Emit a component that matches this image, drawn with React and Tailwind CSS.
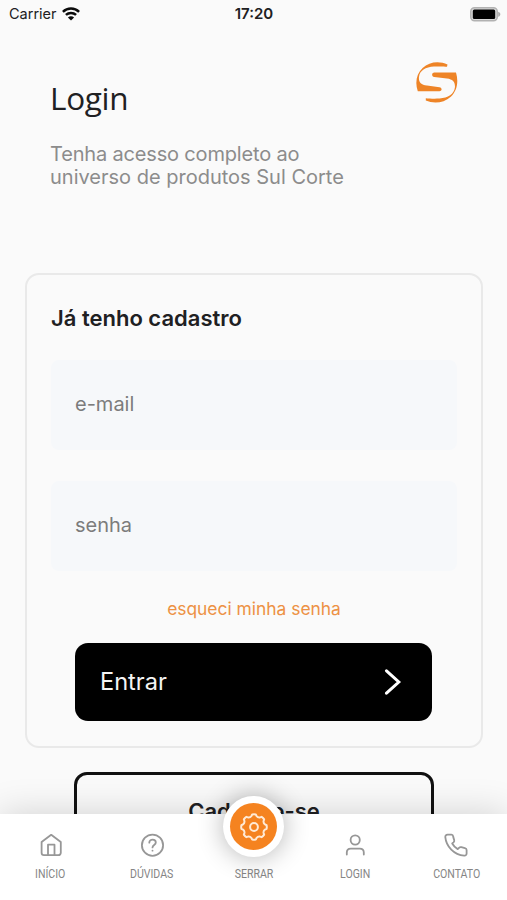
import React from "react";

const grotesk = "font-['Inter','Liberation_Sans',sans-serif]";

function WifiIcon() {
  return (
    <svg width="18" height="14" viewBox="0 0 18 14" fill="none" stroke="#0b0b0b" strokeWidth="2.5">
      <path d="M0.9 4.8C5.4 0.5 12.6 0.5 17.1 4.8" />
      <path d="M3.9 7.9C6.8 5.2 11.2 5.2 14.1 7.9" />
      <path d="M9 13.6L5.9 10.4C7.6 8.8 10.4 8.8 12.1 10.4Z" fill="#0b0b0b" stroke="none" />
    </svg>
  );
}

function BatteryIcon() {
  return (
    <svg width="31" height="15" viewBox="0 0 31 15">
      <rect x="0.75" y="0.75" width="26.5" height="13" rx="3.8" fill="#d8d8d8" stroke="#b2b2b2" strokeWidth="1.5" />
      <rect x="2.8" y="2.6" width="22.4" height="9.4" rx="1.5" fill="#000" />
      <path d="M28.2 4.7C31 5.6 31 8.9 28.2 9.8Z" fill="#aaa" />
    </svg>
  );
}

function BrandLogo() {
  return (
    <svg width="42" height="42" viewBox="0 0 42 42" fill="#ee8427">
      <path d="M31.5 2.6C23.5-1.2 13.4-.4 6.6 6C.4 11.8-1.2 21 1.8 29.2H23.5C26.3 29.2 26.3 25.5 23.5 25.2L11 23.6C4.6 22.8 2.5 20 3 15C3.7 8.5 9.5 5.2 18 4.6C23 4.3 28 4.4 31 4.8Z" />
      <path d="M9.8 38.6C17.6 42 27.9 41.2 34.8 34.8C41 29 42.8 20 40 10.6H18.4C15.4 10.6 15.4 14.7 18.2 15L31 16.6C37.2 17.4 39.4 20.5 38.9 25.6C38.2 32 32 36 23.6 36.5C18.4 36.8 13.4 36.6 9.8 36.2Z" />
    </svg>
  );
}

const polar = (radius, degrees) => {
  const a = (degrees * Math.PI) / 180;
  return `${(radius * Math.sin(a)).toFixed(2)} ${(-radius * Math.cos(a)).toFixed(2)}`;
};

// Eight rounded teeth joined by shallow concave valleys
const gearPath =
  Array.from({ length: 8 }, (_, i) => {
    const c = i * 45;
    return `${i ? "L" : "M"}${polar(12.7, c - 8)}Q${polar(13, c)} ${polar(12.7, c + 8)}L${polar(11.3, c + 13)}Q${polar(10, c + 22.5)} ${polar(11.3, c + 32)}`;
  }).join("") + "Z";

function GearIcon() {
  return (
    <svg width="28" height="28" viewBox="-14 -14 28 28" fill="none" stroke="#ffead5" strokeWidth="2" strokeLinejoin="round">
      <circle r="3.9" />
      <path d={gearPath} />
    </svg>
  );
}

const iconProps = {
  width: 26,
  height: 26,
  viewBox: "0 0 26 26",
  fill: "none",
  stroke: "#979797",
  strokeWidth: 1.8,
  strokeLinejoin: "round",
  strokeLinecap: "round",
};

const tabs = [
  {
    label: "INÍCIO",
    icon: (
      <svg {...iconProps}>
        <path d="M3.6 10L13.2 2.8L22.8 10V20.8A2.4 2.4 0 0 1 20.4 23.2H6A2.4 2.4 0 0 1 3.6 20.8Z" />
        <path d="M10 23V12.7H16.5V23" />
      </svg>
    ),
  },
  {
    label: "DÚVIDAS",
    icon: (
      <svg {...iconProps}>
        <circle cx="13.5" cy="13.2" r="10.6" />
        <path d="M10.3 10.7C10.3 6.6 16.8 6.8 16.8 10.5C16.8 13 13.5 13 13.5 15.4" />
        <path d="M13.5 18.6V18.7" />
      </svg>
    ),
  },
  { label: "SERRAR", icon: null },
  {
    label: "LOGIN",
    icon: (
      <svg {...iconProps}>
        <circle cx="13.2" cy="8" r="4.6" />
        <path d="M4.8 22.6V20.4C4.8 18 6.6 16.6 8.8 16.6H17.8C20.1 16.6 21.8 18 21.8 20.4V22.6" />
      </svg>
    ),
  },
  {
    label: "CONTATO",
    icon: (
      <svg {...iconProps}>
        <path d="M4.5 2.7H8.5C9.6 2.7 10 3.3 10.2 4.5C10.4 5.9 10.9 7 11.2 8C11.5 9 11.2 9.6 10.5 10.3L9.2 11.5C10.6 14 12.2 15.7 14.7 17.1L16 15.8C16.7 15.1 17.4 14.9 18.3 15.2C19.5 15.6 20.6 15.9 21.9 16.1C23 16.3 23.6 16.8 23.6 18V21.5C23.6 23 22.6 23.8 21.2 23.6C11 22.8 3.2 14.5 2.3 5.1C2.2 3.7 3.1 2.7 4.5 2.7Z" />
      </svg>
    ),
  },
];

function Field({ label }) {
  return (
    <div className="flex h-[90px] items-center rounded-lg bg-[#f6f8fa] pb-[2px] pl-[24px]">
      <span className="text-[20px] leading-6 text-[#7c7c7c]">{label}</span>
    </div>
  );
}

export default function App() {
  return (
    <div className={`relative h-[900px] w-[507px] overflow-hidden bg-[#fafafa] text-[#202022] ${grotesk}`}>
      <div className="grid h-7 grid-cols-3 items-center pl-[9px] pr-[6px]">
        <div className="flex items-center gap-[5px]">
          <span className="text-[14.5px] leading-7">Carrier</span>
          <WifiIcon />
        </div>
        <span className="pr-[2px] text-center text-[15px] font-semibold leading-7">17:20</span>
        <div className="flex justify-end">
          <BatteryIcon />
        </div>
      </div>

      <header className="flex h-[245px] justify-between pl-[50px] pr-[49px] pt-[34px]">
        <div>
          <h1 className="mt-[15px] font-['Open_Sans',sans-serif] text-[31.5px] leading-[42px] tracking-[-0.3px]">Login</h1>
          <p className="mt-[24px] whitespace-nowrap text-[20px] leading-[23px] text-[#8c8c8c]">
            <span className="tracking-[-0.17px]">Tenha acesso completo ao</span>
            <br />
            universo de produtos Sul Corte
          </p>
        </div>
        <BrandLogo />
      </header>

      <section className="ml-[25px] flex h-[475px] w-[458px] flex-col rounded-[14px] border-2 border-[#e9e9e9] px-6 pt-[27px]">
        <h2 className="text-[22px] font-semibold leading-8">Já tenho cadastro</h2>
        <div className="mt-[26px] flex flex-col gap-[31px]">
          <Field label="e-mail" />
          <Field label="senha" />
        </div>
        <a className="mt-[26px] text-center text-[17.4px] leading-6 text-[#ed9144]">esqueci minha senha</a>
        <button className="ml-6 mr-[25px] mt-[22px] flex h-[78px] items-center justify-between rounded-[13px] bg-black pl-[25px] pr-[30px] text-[#f4f4f4]">
          <span className="text-[23.6px] leading-8">Entrar</span>
          <svg width="18" height="26" viewBox="0 0 18 26" fill="none" stroke="#fff" strokeWidth="3">
            <path d="M2.5 1.8L14.8 13L2.5 24.2" strokeLinecap="round" />
          </svg>
        </button>
      </section>

      <button className="ml-[74px] mt-6 flex h-20 w-[360px] items-center justify-center rounded-[13px] border-[3px] border-[#111] pb-[2px]">
        <span className="text-[22px] font-semibold leading-8">Cadastre-se</span>
      </button>

      <nav className="absolute inset-x-0 bottom-0 h-[86px] bg-white shadow-[0_0_36px_rgba(0,0,0,0.17)]">
        <div className="flex h-full pt-[18px]">
          {tabs.map((tab) => (
            <div key={tab.label} className="flex flex-1 flex-col items-center">
              <div className="h-[26px]">{tab.icon}</div>
              <span className="mt-[7px] scale-x-[0.88] font-['Roboto',sans-serif] text-[12px] leading-[18px] text-[#858585]">
                {tab.label}
              </span>
            </div>
          ))}
        </div>
        <div className="absolute -top-[18px] left-[223px] flex size-[61px] items-center justify-center rounded-full bg-white shadow-[0_0_26px_rgba(0,0,0,0.3)]">
          <div className="flex size-[47px] items-center justify-center rounded-full bg-[#f58320]">
            <GearIcon />
          </div>
        </div>
      </nav>
    </div>
  );
}
